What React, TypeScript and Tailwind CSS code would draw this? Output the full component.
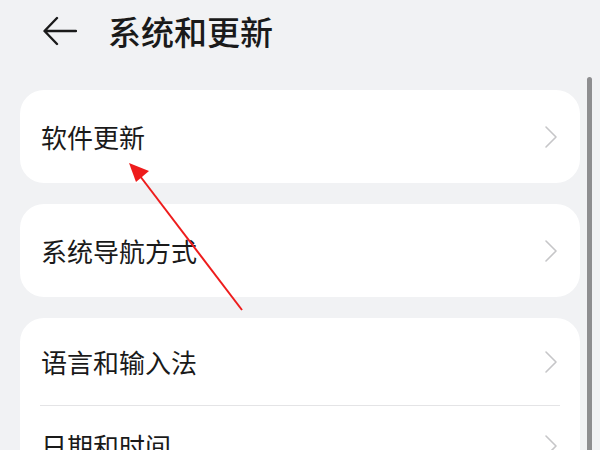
import React from 'react'

const Chevron = () => (
  <svg width="14" height="24" viewBox="0 0 14 24" fill="none">
    <path d="M2 2 L12 12 L2 22" stroke="#c6c6c8" strokeWidth="1.6" strokeLinecap="round" strokeLinejoin="round" />
  </svg>
)

const Row = ({ label }: { label: string }) => (
  <div className="flex h-[93px] items-center justify-between pl-[21px] pr-[22px]">
    <span className="text-[26px] leading-none text-[#1a1a1a]">{label}</span>
    <Chevron />
  </div>
)

export default function App() {
  return (
    <div
      className="relative h-[450px] w-[600px] overflow-hidden bg-[#f1f2f4]"
      style={{ fontFamily: '"Noto Sans CJK SC", "Noto Sans", sans-serif' }}
    >
      {/* header */}
      <div className="flex h-[62px] items-center pl-[43px]">
        <svg width="34" height="30" viewBox="0 0 34 30" fill="none">
          <path d="M33 15 H2 M14 2 L1.5 15 L14 28" stroke="#1a1a1a" strokeWidth="2.4" strokeLinecap="round" strokeLinejoin="round" />
        </svg>
        <h1 className="ml-[31px] text-[33px] font-medium leading-none text-[#1a1a1a]">系统和更新</h1>
      </div>

      <div className="mt-[28px] flex flex-col gap-[21px] px-[20px]">
        <div className="rounded-[24px] bg-white">
          <Row label="软件更新" />
        </div>
        <div className="rounded-[24px] bg-white">
          <Row label="系统导航方式" />
        </div>
        <div className="rounded-[24px] bg-white">
          <div className="flex h-[87px] items-center justify-between pl-[21px] pr-[22px]">
            <span className="text-[26px] leading-none text-[#1a1a1a]">语言和输入法</span>
            <Chevron />
          </div>
          <div className="mx-[20px] h-px bg-[#e4e4e6]" />
          <div className="flex h-[80px] items-center justify-between pl-[21px] pr-[22px]">
            <span className="text-[26px] leading-none text-[#1a1a1a]">日期和时间</span>
            <Chevron />
          </div>
        </div>
      </div>

      {/* scrollbar */}
      <div className="absolute right-[8px] top-[77px] h-[400px] w-[5px] rounded-full bg-[#8e8e90]" />

      {/* annotation arrow */}
      <svg className="pointer-events-none absolute left-0 top-0" width="600" height="450" viewBox="0 0 600 450">
        <line x1="242" y1="310" x2="140" y2="176" stroke="#ee1c1c" strokeWidth="2" />
        <polygon points="129,163 149,171 136,182" fill="#ee1c1c" />
      </svg>
    </div>
  )
}
